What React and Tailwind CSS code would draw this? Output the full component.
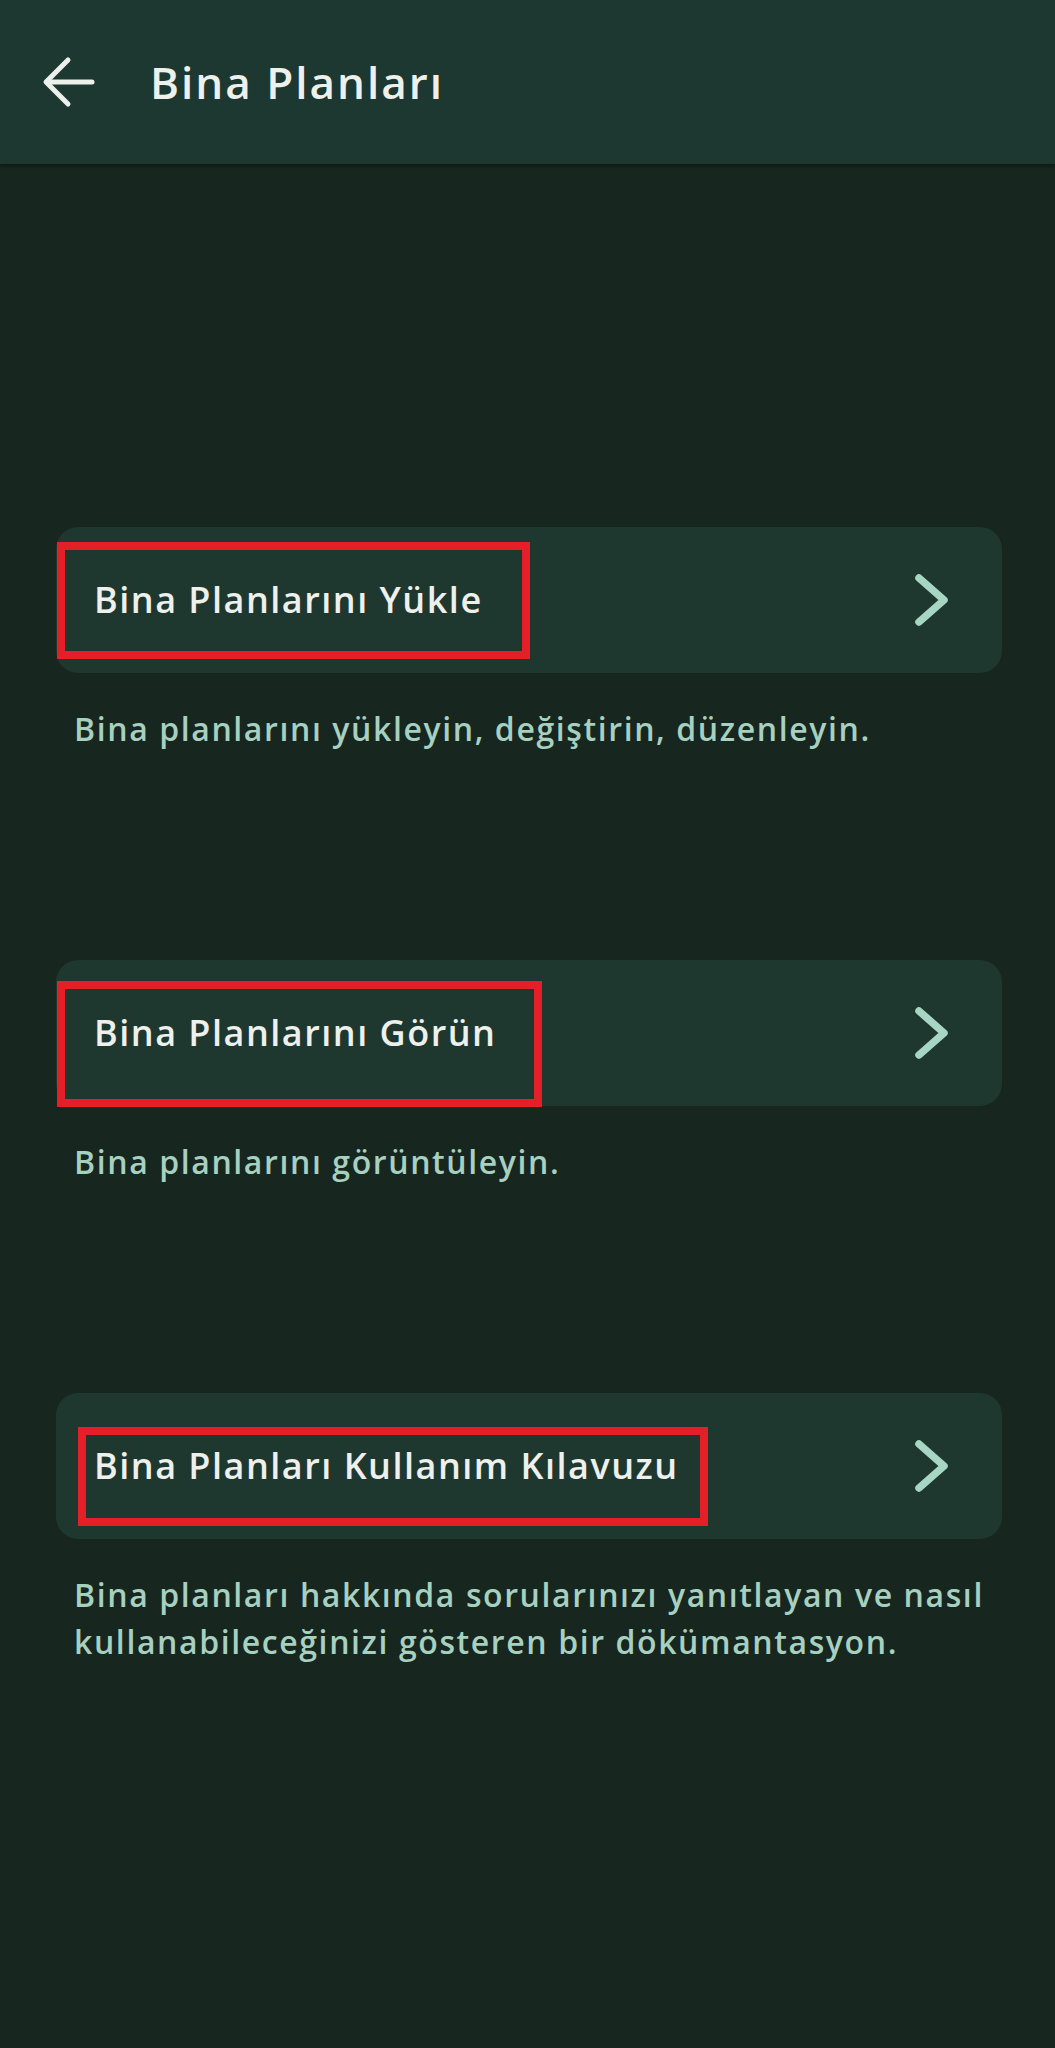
import React from "react";

const items = [
  {
    title: "Bina Planlarını Yükle",
    desc: "Bina planlarını yükleyin, değiştirin, düzenleyin.",
    box: "left-[1px] top-[15px] w-[473px] h-[117px]",
  },
  {
    title: "Bina Planlarını Görün",
    desc: "Bina planlarını görüntüleyin.",
    box: "left-[1px] top-[21px] w-[485px] h-[126px]",
  },
  {
    title: "Bina Planları Kullanım Kılavuzu",
    desc: "Bina planları hakkında sorularınızı yanıtlayan ve nasıl kullanabileceğinizi gösteren bir dökümantasyon.",
    box: "left-[22px] top-[34px] w-[630px] h-[99px]",
  },
];

function BackArrow() {
  return (
    <svg width="53" height="52" viewBox="0 0 53 52" fill="none" stroke="#eef0ec" strokeWidth="5" strokeLinecap="round" strokeLinejoin="round">
      <line x1="5" y1="26" x2="50" y2="26" />
      <polyline points="26,4 4,26 26,48" />
    </svg>
  );
}

function Chevron() {
  return (
    <svg width="36" height="52" viewBox="0 0 36 52" fill="none" stroke="#a7d6c4" strokeWidth="7.5" strokeLinecap="round" strokeLinejoin="round">
      <polyline points="6,4 31,26 6,48" />
    </svg>
  );
}

export default function App() {
  return (
    <div
      className="min-h-[2048px] bg-[#17261f]"
      style={{ fontFamily: '"Open Sans", "Noto Sans", sans-serif' }}
    >
      {/* Top bar */}
      <div className="h-[164px] bg-[#1c3830] flex items-center pl-[42px] shadow-[0_2px_3px_rgba(0,0,0,0.35)]">
        <BackArrow />
        <h1 className="ml-[55px] text-[44px] font-semibold text-[#eef0ec] tracking-[2px]">
          Bina Planları
        </h1>
      </div>

      {/* Options */}
      <div className="pt-[363px] pl-[56px] pr-[53px] flex flex-col gap-[208px]">
        {items.map((item) => (
          <div key={item.title}>
            <div className="relative h-[146px] rounded-[22px] bg-[#1e3830] flex items-center justify-between pl-[38px] pr-[53px]">
              <span className="text-[36px] font-semibold text-[#eef0ec] tracking-[1.5px]">
                {item.title}
              </span>
              <Chevron />
              <div className={"absolute border-[8px] border-[#e41f27] " + item.box}></div>
            </div>
            <p className="mt-[32px] pl-[18px] -mr-[40px] text-[32px] leading-[47px] font-semibold text-[#a6d0c0] tracking-[1.6px]">
              {item.desc}
            </p>
          </div>
        ))}
      </div>
    </div>
  );
}
